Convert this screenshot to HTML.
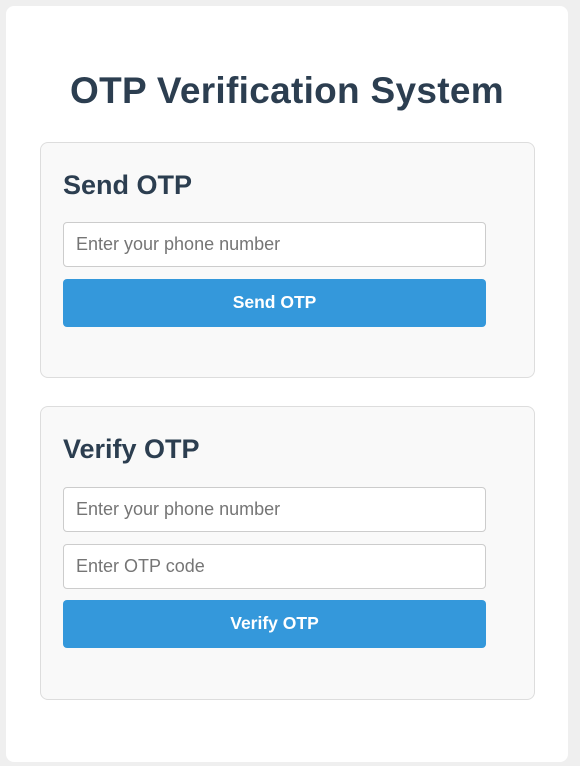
<!DOCTYPE html>
<html><head><meta charset="utf-8"><style>
*{box-sizing:border-box;margin:0;padding:0}
body{width:580px;height:766px;background:#efefef;font-family:"Liberation Sans",sans-serif;position:relative;overflow:hidden}
.card{position:absolute;left:6px;top:6px;width:562px;height:756px;background:#fff;border-radius:8px}
h1{position:absolute;left:0;width:574px;top:70px;text-align:center;font-size:37px;letter-spacing:0.3px;font-weight:bold;color:#2c3e50;line-height:42px}
.sec{position:absolute;left:40px;width:495px;background:#f9f9f9;border:1px solid #ddd;border-radius:8px}
h2{position:absolute;left:22px;font-size:27px;font-weight:bold;color:#2c3e50;line-height:30px}
.in{position:absolute;left:22px;width:423px;height:45px;background:#fff;border:1px solid #ccc;border-radius:4px;font-size:18px;color:#757575;padding-left:12px;line-height:43px}
.bt{position:absolute;left:22px;width:423px;height:48px;background:#3498db;border-radius:4px;color:#fff;font-weight:bold;font-size:17.5px;text-align:center;line-height:46px}
</style></head><body>
<div class="card"></div>
<h1>OTP Verification System</h1>
<div class="sec" style="top:142px;height:236px">
<h2 style="top:27px">Send OTP</h2>
<div class="in" style="top:79px">Enter your phone number</div>
<div class="bt" style="top:136px">Send OTP</div>
</div>
<div class="sec" style="top:406px;height:294px">
<h2 style="top:27px">Verify OTP</h2>
<div class="in" style="top:80px">Enter your phone number</div>
<div class="in" style="top:137px">Enter OTP code</div>
<div class="bt" style="top:193px">Verify OTP</div>
</div>
</body></html>
